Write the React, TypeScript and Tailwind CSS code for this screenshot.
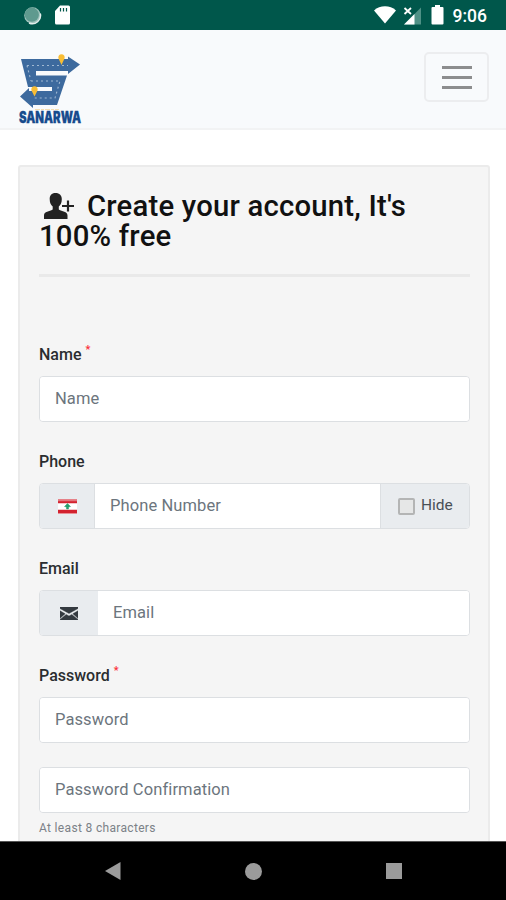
import React from 'react';

interface FieldProps {
    label: string;
    required?: boolean;
    children: React.ReactNode;
}

const inputClass = 'min-w-0 flex-1 bg-white px-[15px] text-[16.5px] tracking-[0.1px] text-[#495057] outline-none placeholder:text-[#6c757d] placeholder:opacity-100';
const groupClass = 'flex h-[46px] overflow-hidden rounded-[4px] border border-[#dcdfe2] bg-white';

const Field = ({ label, required, children }: FieldProps) => (
    <div className="mb-[29px]">
        <label className="mb-[11px] flex h-[21px] items-center text-[16px] font-medium text-[#2a2d30]">
            {label}
            {required && <span className="-mt-[9px] ml-[4px] text-[11px] text-red-500">*</span>}
        </label>
        {children}
    </div>
);

const StatusBar = () => (
    <div className="flex h-[30px] shrink-0 items-center bg-[#00574b] text-white">
        <svg className="ml-[23px]" width="19" height="19" viewBox="0 0 19 19">
            <circle cx="9.5" cy="9.5" r="8.3" fill="#9fc3bc" />
            <circle cx="8.8" cy="8.7" r="7.1" fill="#5f9a8f" />
            <path d="M17.3 7.5A8.2 8.2 0 0 1 6 17" fill="none" stroke="#e3eeec" strokeWidth="1.4" />
        </svg>
        <svg className="ml-[12px]" width="17" height="20" viewBox="0 0 17 20">
            <path d="M6 .5h8.5A1.5 1.5 0 0 1 16 2v16a1.5 1.5 0 0 1-1.5 1.5h-12A1.5 1.5 0 0 1 1 18V6z" fill="#fff" />
            <path d="M6.5 3v3.5M9.5 3v3.5M12.5 3v3.5" stroke="#00574b" strokeWidth="1.2" />
        </svg>
        <svg className="ml-auto" width="22" height="18" viewBox="0 0 22 18">
            <path d="M0 4.4C6-1 16-1 22 4.4L11 17.5z" fill="#fff" />
        </svg>
        <svg className="ml-[7px]" width="20" height="19" viewBox="0 0 20 19">
            <path d="M1 18.5L18 1.5v17z" fill="#4f9186" />
            <path d="M1 18.5L11.5 8v10.5z" fill="#fff" />
            <path d="M1.5 2L8 8M8 2L1.5 8" stroke="#fff" strokeWidth="1.8" />
        </svg>
        <svg className="ml-[8px]" width="13" height="20" viewBox="0 0 13 20">
            <path d="M4 0h5v2h2.5a1 1 0 0 1 1 1v15.5a1 1 0 0 1-1 1h-10a1 1 0 0 1-1-1V3a1 1 0 0 1 1-1H4z" fill="#fff" />
        </svg>
        <span className="mt-[2px] mr-[19px] ml-[9px] text-[17.5px] font-medium">9:06</span>
    </div>
);

const Logo = () => (
    <div className="w-[66px]">
        <svg width="66" height="57" viewBox="0 0 66 57">
            <path d="M3 6h47V3.500L62 11.500 50 21v-3H18v4.500h31L39 52H15v3L2 43.500 11 35v3h23v-4H10z" fill="#3d6a9e" />
            <path d="M9 12.500h41M13 28h29l-5 17H15M9 12.500L13 28" fill="none" stroke="#a0b8d2" strokeWidth="1.1" strokeDasharray="2 3" />
            <path d="M43.500 12l-3-6.500a3.200 3.200 0 1 1 6 0zM16.500 43.500l-3-6a3.200 3.200 0 1 1 6 0z" fill="#f8bd35" />
            <path d="M17 56.500h24" stroke="#f5deb0" strokeWidth="1" strokeDasharray="5 1 3 1" />
        </svg>
        <svg className="-mt-px overflow-visible" width="66" height="18" viewBox="0 0 66 18">
            <text x="1" y="14" textLength="62" lengthAdjust="spacingAndGlyphs" fontFamily="Inter, sans-serif" fontSize="15.5" fontWeight="900" fill="#174b8d" stroke="#174b8d" strokeWidth="0.3">SANARWA</text>
        </svg>
    </div>
);

const Header = () => (
    <header className="flex h-[100px] shrink-0 items-start border-b-2 border-[#f2f3f4] bg-[#f8fafc]">
        <div className="mt-[23px] ml-[18px]">
            <Logo />
        </div>
        <button className="mt-[22px] mr-[17px] ml-auto flex h-[50px] w-[65px] flex-col items-center justify-center gap-[7px] rounded-[5px] border-2 border-[#ecedef]">
            <span className="h-[3px] w-[30px] bg-[#8c8d8e]" />
            <span className="h-[3px] w-[30px] bg-[#8c8d8e]" />
            <span className="h-[3px] w-[30px] bg-[#8c8d8e]" />
        </button>
    </header>
);

const LebanonFlag = () => (
    <svg width="19" height="15" viewBox="0 0 19 15">
        <rect width="19" height="15" rx="1" fill="#fff" />
        <path d="M0 .5h19v3.700H0zM0 10.800h19v3.700H0z" fill="#d3222f" />
        <path d="M0 .5h19v1.700H0z" fill="#e3757c" />
        <path d="M9.500 4.500l3 3-2 .5v2h-2V8l-2-.5z" fill="#25a06e" stroke="#25a06e" strokeWidth=".5" />
    </svg>
);

const App = () => {
    return (
        <div className="flex h-[900px] w-[506px] flex-col overflow-hidden bg-white font-[Roboto,sans-serif]">
            <StatusBar />
            <Header />
            <main className="min-h-0 flex-1 overflow-hidden pt-[35px] pr-[16px] pl-[18px]">
                <div className="h-[720px] rounded-[3px] border-2 border-[#ebebeb] bg-[#f5f5f5] pt-[24px] pr-[18px] pl-[19px]">
                    <h2 className="text-[29.3px] leading-[30px] font-medium tracking-[0.2px] text-[#111]">
                        <svg className="mr-[12px] ml-[5px] inline-block align-[-3px]" width="31" height="26" viewBox="0 0 31 26">
                            <path d="M11.500 0C7.500 0 5.500 2.600 5.700 6.300c0 3.700 1.300 5.700 3 7.300v3C5.500 18.500 0 18.500 0 22.500V26h23.500v-3.500c0-4-5.500-4-8.700-5.900v-3c1.700-1.600 3-3.600 3-7.300C18 2.600 15.500 0 11.500 0z" fill="#222" />
                            <path d="M24 7.500v11M18 13h12" stroke="#222" strokeWidth="2.2" />
                        </svg>
                        Create your account, It's 100% free
                    </h2>
                    <hr className="mt-[23px] mb-[67px] border-t-[3px] border-[#e9e9e9]" />

                    <Field label="Name" required>
                        <div className={groupClass}>
                            <input className={inputClass} placeholder="Name" />
                        </div>
                    </Field>

                    <Field label="Phone">
                        <div className={groupClass}>
                            <span className="flex w-[55px] items-center justify-center border-r border-[#dcdfe2] bg-[#e9ecef]">
                                <LebanonFlag />
                            </span>
                            <input className={inputClass} placeholder="Phone Number" />
                            <span className="flex w-[89px] items-center border-l border-[#dcdfe2] bg-[#e9ecef] pl-[17px] text-[15.5px] text-[#495057]">
                                <span className="mr-[6px] size-[17px] rounded-[2px] border-2 border-[#b4b5b5] bg-[#e6e7e7]" />
                                Hide
                            </span>
                        </div>
                    </Field>

                    <Field label="Email">
                        <div className={groupClass}>
                            <span className="flex w-[58px] items-center justify-center bg-[#e9ecef]">
                                <svg width="18" height="13" viewBox="0 0 18 13">
                                    <path d="M0 0h18v1.500L9 6.500 0 1.500zM0 3.800l5.200 3L0 11.300zM18 3.800v7.500l-5.200-4.500zM6.200 7.400L9 9l2.800-1.600 6.200 5V13H0v-.6z" fill="#343a40" stroke="#343a40" strokeWidth=".4" />
                                </svg>
                            </span>
                            <input className={inputClass} placeholder="Email" />
                        </div>
                    </Field>

                    <Field label="Password" required>
                        <div className={groupClass}>
                            <input className={inputClass} placeholder="Password" />
                        </div>
                        <div className={`${groupClass} mt-[24px]`}>
                            <input className={inputClass} placeholder="Password Confirmation" />
                        </div>
                        <p className="mt-[5px] text-[12px] leading-[20px] tracking-[0.33px] text-[#7b8187]">At least 8 characters</p>
                    </Field>
                </div>
            </main>
            <nav className="flex h-[59px] shrink-0 items-center justify-between border-t border-[#555] bg-black pr-[104px] pl-[105px]">
                <svg width="16" height="18" viewBox="0 0 16 18"><path d="M0 9L15.500 0v18z" fill="#9b9b9b" /></svg>
                <span className="size-[17px] rounded-full bg-[#9b9b9b]" />
                <span className="size-[16px] bg-[#9b9b9b]" />
            </nav>
        </div>
    );
};

export default App;
